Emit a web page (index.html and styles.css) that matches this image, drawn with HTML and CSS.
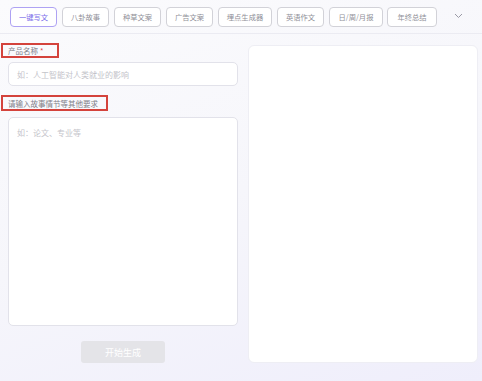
FILE: index.html
```html
<!DOCTYPE html>
<html lang="zh">
<head>
<meta charset="utf-8">
<link rel="stylesheet" href="styles.css">
</head>
<body>
<div class="page">
  <header class="tabbar">
    <div class="tabs">
      <span class="tab active">一键写文</span>
      <span class="tab">八卦故事</span>
      <span class="tab">种草文案</span>
      <span class="tab">广告文案</span>
      <span class="tab wide">埋点生成器</span>
      <span class="tab">英语作文</span>
      <span class="tab wide">日/周/月报</span>
      <span class="tab last">年终总结</span>
    </div>
    <svg class="chev" width="9" height="6" viewBox="0 0 9 6"><path d="M1 1l3.5 3.5L8 1" fill="none" stroke="#9a9aa6" stroke-width="1"/></svg>
  </header>
  <main class="main">
    <section class="form">
      <label class="label first">产品名称 <span class="req">*</span></label>
      <div class="input">如：人工智能对人类就业的影响</div>
      <label class="label second">请输入故事情节等其他要求</label>
      <div class="textarea">如：论文、专业等</div>
      <div class="actions"><button class="btn">开始生成</button></div>
    </section>
    <section class="panel"></section>
  </main>
</div>
</body>
</html>
```

FILE: styles.css
```css
* { box-sizing: border-box; }
html, body { margin: 0; height: 100%; }
body {
  font-family: "Noto Sans CJK SC", "Noto Sans", sans-serif;
  background: linear-gradient(160deg, #fbfbfd 0%, #f6f6fb 50%, #efeefb 100%);
  overflow: hidden;
}
.page { width: 482px; height: 381px; }
.tabbar {
  height: 34px;
  border-bottom: 1px solid #ebebf2;
  display: flex;
  align-items: flex-start;
  padding: 7px 0 0 10px;
}
.tabs { display: flex; gap: 5px; }
.tab {
  height: 20px;
  width: 47px;
  border: 1px solid #d2d2d8;
  border-radius: 4px;
  font-size: 7.3px;
  color: #909098;
  display: flex;
  align-items: center;
  justify-content: center;
  background: #fff;
}
.tab.wide { width: 54px; }
.tab.last { width: 50px; margin-left: -1px; }
.tab.active { border-color: #aea2f3; color: #7a6cea; }
.chev { margin: 6px 0 0 17px; }
.main {
  display: flex;
  gap: 10px;
  padding: 9px 4px 0 8px;
}
.form { width: 230px; display: flex; flex-direction: column; }
.label {
  align-self: flex-start;
  margin-left: -7px;
  border: 2px solid #d4433c;
  padding: 0 5px;
  font-size: 7.5px;
  color: #808088;
  line-height: 11px;
  height: 15px;
  display: flex;
  align-items: center;
}
.label.first { width: 58px; }
.label.second { width: 107px; height: 16px; margin-top: 9px; }
.req { color: #e8484a; margin-left: 2px; }
.input {
  margin-top: 4px;
  height: 24px;
  border: 1px solid #e2e2ea;
  border-radius: 5px;
  background: #fff;
  font-size: 8px;
  color: #c4c4ca;
  padding-left: 8px;
  display: flex;
  align-items: center;
}
.textarea {
  margin-top: 6px;
  height: 209px;
  border: 1px solid #e2e2ea;
  border-radius: 5px;
  background: #fff;
  font-size: 8px;
  color: #c4c4ca;
  padding: 9px 8px;
}
.actions { display: flex; padding: 15px 0 0 73px; }
.btn {
  width: 84px;
  height: 22px;
  border: 0;
  border-radius: 3px;
  background: #e4e4e8;
  color: #fff;
  font-family: inherit;
  font-size: 9px;
}
.panel {
  margin-top: 2px;
  width: 230px;
  height: 318px;
  background: #fff;
  border: 1px solid #eeeef4;
  border-radius: 6px;
}
```
